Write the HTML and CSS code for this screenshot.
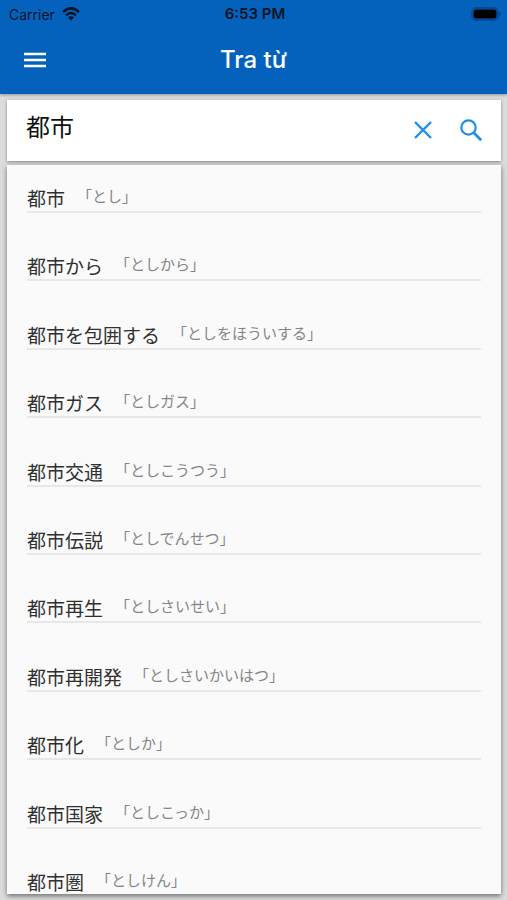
FILE: index.html
```html
<!DOCTYPE html>
<html lang="vi">
<head>
<meta charset="utf-8">
<meta name="viewport" content="width=device-width, initial-scale=1">
<title>Tra từ</title>
<link rel="stylesheet" href="styles.css">
</head>
<body>
<header class="top">
  <div class="status">
    <div class="carrier">Carrier
      <svg class="wifi" viewBox="0 0 18 14" aria-hidden="true"><g fill="none" stroke="#041226" stroke-width="2.500"><path d="M1 5Q9-2.300 17 5"/><path d="M4 8.200Q9 3.800 14 8.200"/></g><path d="M6 10.400Q9 8 12 10.400L9 13.500Z" fill="#041226"/></svg>
    </div>
    <div class="time">6:53 PM</div>
    <svg class="battery" viewBox="0 0 30 14" aria-hidden="true"><rect x="1" y="1" width="26" height="12" rx="4" fill="none" stroke="#064387" stroke-width="1.500"/><rect x="2.500" y="2.500" width="23" height="9" rx="2.500"/><path d="M28.500 5Q31 7 28.500 9Z" fill="#043a78"/></svg>
  </div>
  <div class="bar">
    <button class="icon-btn" type="button" aria-label="Menu"><svg class="menu" viewBox="0 0 24 16"><path d="M1 2h22M1 8h22M1 14h22" stroke="#fff" stroke-width="2.500"/></svg></button>
    <h1 class="title">Tra từ</h1>
  </div>
</header>
<main class="content">
  <form class="search">
    <input class="query" type="text" value="都市" aria-label="Tra từ" lang="ja">
    <button class="icon-btn" type="button" aria-label="Xóa"><svg class="glyph" viewBox="0 0 24 24"><path d="M4 4l16 16M20 4L4 20" fill="none" stroke="#1e90e8" stroke-width="2.400"/></svg></button>
    <button class="icon-btn" type="submit" aria-label="Tìm"><svg class="glyph" viewBox="0 0 24 24"><g fill="none" stroke="#1e90e8" stroke-width="2.200"><circle cx="9.500" cy="9.500" r="7.200"/><path d="M14.800 14.800l7.400 7.400" stroke-width="2.800"/></g></svg></button>
  </form>
  <section class="results">
    <ul class="list" lang="ja">
      <li class="row"><span class="word">都市</span><span class="reading">「とし」</span></li>
      <li class="row"><span class="word">都市から</span><span class="reading">「としから」</span></li>
      <li class="row"><span class="word">都市を包囲する</span><span class="reading">「としをほういする」</span></li>
      <li class="row"><span class="word">都市ガス</span><span class="reading">「としガス」</span></li>
      <li class="row"><span class="word">都市交通</span><span class="reading">「としこうつう」</span></li>
      <li class="row"><span class="word">都市伝説</span><span class="reading">「としでんせつ」</span></li>
      <li class="row"><span class="word">都市再生</span><span class="reading">「としさいせい」</span></li>
      <li class="row"><span class="word">都市再開発</span><span class="reading">「としさいかいはつ」</span></li>
      <li class="row"><span class="word">都市化</span><span class="reading">「としか」</span></li>
      <li class="row"><span class="word">都市国家</span><span class="reading">「としこっか」</span></li>
      <li class="row"><span class="word">都市圏</span><span class="reading">「としけん」</span></li>
    </ul>
  </section>
</main>
</body>
</html>
```
FILE: styles.css
```css
* { box-sizing: border-box; }

body {
  margin: 0;
  min-height: 100vh;
  display: flex;
  flex-direction: column;
  background: #dcdcdc;
  font-family: Inter, "Noto Sans CJK JP", sans-serif;
}

.top {
  background: #0462bd;
  padding-bottom: 6px;
  box-shadow: 0 1px 3px rgba(0, 0, 0, .35);
}

.status {
  display: grid;
  grid-template-columns: 1fr auto 1fr;
  align-items: center;
  height: 28px;
  padding: 0 6px 0 9px;
  font-size: 14px;
  color: #041226;
}

.carrier { display: flex; align-items: center; gap: 7px; }
.wifi { width: 18px; height: 14px; }
.time { font-size: 15px; line-height: 20px; font-weight: 600; }
.battery { width: 30px; height: 14px; justify-self: end; }

.bar {
  display: grid;
  grid-template-columns: 48px 1fr 48px;
  align-items: center;
  height: 60px;
  padding: 4px 11px 0;
}

.title {
  margin: 0;
  text-align: center;
  font-size: 24px;
  line-height: 32px;
  font-weight: 500;
  color: #fff;
}

.icon-btn {
  display: flex;
  align-items: center;
  justify-content: center;
  width: 48px;
  height: 48px;
  padding: 0;
  border: 0;
  background: none;
}

.menu { width: 24px; height: 16px; }
.glyph { width: 24px; height: 24px; }

.content {
  flex: 1;
  display: flex;
  flex-direction: column;
  gap: 4px;
  padding: 6px 6px 6px 7px;
}

.search {
  display: flex;
  align-items: center;
  height: 61px;
  padding: 0 6px 2px 19px;
  background: #fff;
  box-shadow: 0 1px 3px rgba(0, 0, 0, .4);
}

.query {
  flex: 1;
  min-width: 0;
  height: 48px;
  padding: 0 0 8px;
  border: 0;
  outline: 0;
  background: none;
  font: 24px "Noto Sans CJK JP", sans-serif;
  color: #111;
}

.results {
  flex: 1;
  display: flex;
  overflow: hidden;
  background: #fafafa;
  box-shadow: 0 2px 5px rgba(0, 0, 0, .5);
}

/* The last row runs slightly past the card, as in a scrolled list. */
.list {
  flex: 1;
  display: grid;
  grid-template-rows: 48px repeat(10, minmax(48px, 1fr));
  margin: 0 20px -3px;
  padding: 0;
  list-style: none;
  font-family: "Noto Sans CJK JP", sans-serif;
}

.row {
  display: flex;
  align-items: flex-end;
  gap: 12px;
  border-bottom: 2px solid #e8e8e8;
}

.word { font-size: 19px; line-height: 26px; color: #303030; }
.reading { font-size: 15px; line-height: 30px; color: #858585; }
```
